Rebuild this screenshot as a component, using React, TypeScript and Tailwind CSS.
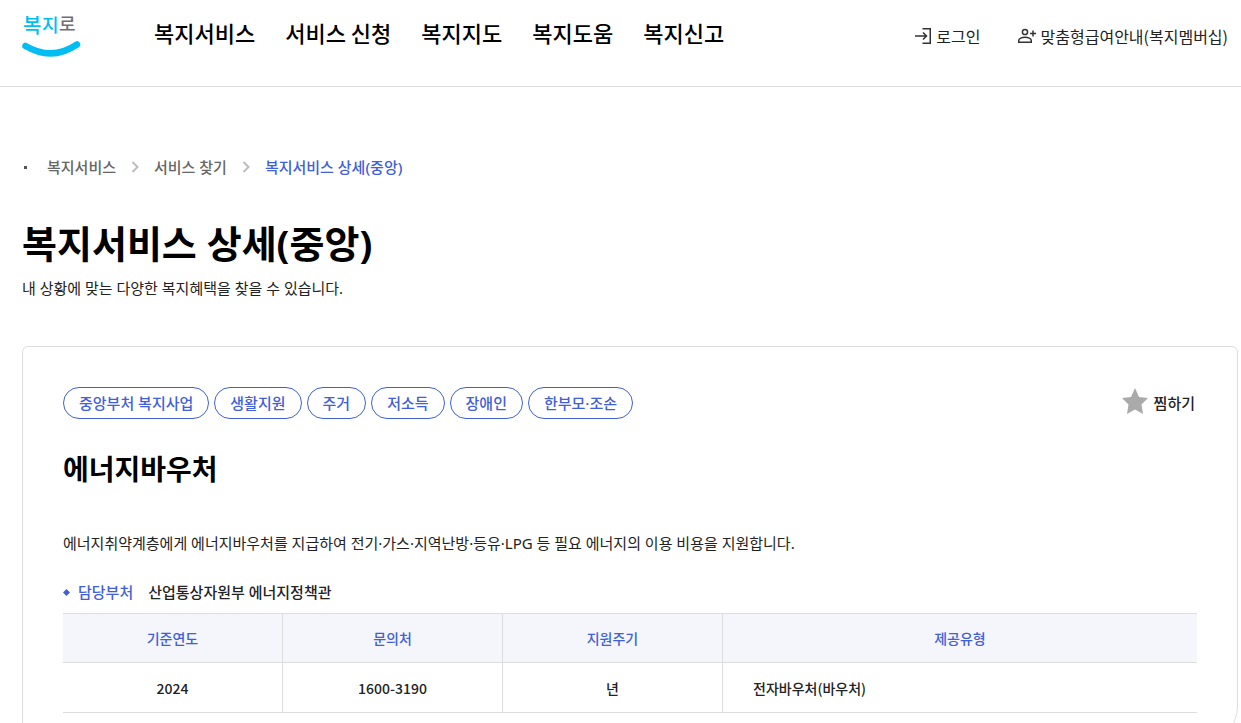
import React from 'react';

interface Column {
  title: string;
  value: string;
  width: string;
  align: string;
}

const menus = ['복지서비스', '서비스 신청', '복지지도', '복지도움', '복지신고'];

const crumbs = ['복지서비스', '서비스 찾기'];

const tags = ['중앙부처 복지사업', '생활지원', '주거', '저소득', '장애인', '한부모·조손'];

const columns: Column[] = [
  { title: '기준연도', value: '2024', width: 'w-[220px]', align: 'text-center' },
  { title: '문의처', value: '1600-3190', width: 'w-[220px]', align: 'text-center' },
  { title: '지원주기', value: '년', width: 'w-[220px]', align: 'text-center' },
  { title: '제공유형', value: '전자바우처(바우처)', width: '', align: 'text-left' },
];

const Logo: React.FC = () => (
  <svg width="60" height="52" viewBox="0 0 60 52" role="img" aria-label="복지로">
    <g fontFamily="'Noto Sans CJK KR', sans-serif" fontWeight="500">
      <text x="1" y="27" fontSize="20" fill="#00bdf2">복</text>
      <text x="20" y="26" fontSize="18" fill="#00bdf2">지</text>
      <text x="37" y="25" fontSize="18" fill="#6f6f74">로</text>
    </g>
    <path d="M3.500 40 Q30 55.500 55 38.500" fill="none" stroke="#00bdf2" strokeWidth="6.500" strokeLinecap="round" />
  </svg>
);

const LoginIcon: React.FC = () => (
  <svg width="18" height="18" viewBox="0 0 18 18" fill="none" stroke="#333" strokeWidth="1.5" aria-hidden="true">
    <path d="M8.500 1.750H16.250V16.250H8.500M1 9H12.500M9 5.500L12.500 9L9 12.500" />
  </svg>
);

const MemberIcon: React.FC = () => (
  <svg width="20" height="16" viewBox="0 0 20 16" fill="none" stroke="#333" strokeWidth="1.5" aria-hidden="true">
    <circle cx="8" cy="4" r="2.600" />
    <path d="M1.750 14.250V12.500C1.750 10.500 5 9.250 8 9.250S14.250 10.500 14.250 12.500V14.250ZM16 2.500V8.500M13 5.500H19" />
  </svg>
);

const Chevron: React.FC = () => (
  <svg width="8" height="12" viewBox="0 0 8 12" fill="none" stroke="#bdbdbd" strokeWidth="2" aria-hidden="true">
    <path d="M1.500 1L6.500 6L1.500 11" />
  </svg>
);

const Header: React.FC = () => (
  <header className="flex h-[87px] items-start justify-between border-b border-[#dddddd] pl-[22px] pr-[13px] font-['Noto_Sans_CJK_KR',sans-serif]">
    <div className="flex items-start">
      <a href="#" className="mt-[6px]"><Logo /></a>
      <nav className="ml-[72px] mt-4 flex gap-[30px] text-[22px] font-medium leading-[32px] text-black">
        {menus.map((menu) => (
          <a key={menu} href="#">{menu}</a>
        ))}
      </nav>
    </div>
    <div className="mt-6 flex gap-9 text-base leading-6">
      <a href="#" className="flex items-center gap-1"><LoginIcon />로그인</a>
      <a href="#" className="flex items-center gap-1"><MemberIcon />맞춤형급여안내(복지멤버십)</a>
    </div>
  </header>
);

const DetailTable: React.FC = () => (
  <table className="mt-[9px] w-full table-fixed border-separate border-spacing-0 font-['Noto_Sans_CJK_KR',sans-serif] text-[14px] leading-6">
    <thead>
      <tr className="bg-[#f5f6fb] text-[#4160d7]">
        {columns.map((col) => (
          <th key={col.title} scope="col" className={`${col.width} h-[50px] border-y border-r border-[#dddddd] font-medium last:border-r-0`}>
            {col.title}
          </th>
        ))}
      </tr>
    </thead>
    <tbody>
      <tr>
        {columns.map((col) => (
          <td key={col.title} className={`${col.align} h-[50px] border-b border-r border-[#dddddd] px-[30px] font-medium last:border-r-0`}>
            {col.value}
          </td>
        ))}
      </tr>
    </tbody>
  </table>
);

const App: React.FC = () => {
  return (
    <div className="min-h-screen bg-white font-['Noto_Sans','Noto_Sans_CJK_KR',sans-serif] text-[#222222]">
      <Header />

      <main className="pl-[22px] pr-[3px]">
        <nav className="mt-[68px] flex items-center text-[15px] font-medium leading-6 text-[#666666]">
          <span className="ml-[2px] mr-5 size-[3px] bg-[#555555]" />
          {crumbs.map((crumb) => (
            <React.Fragment key={crumb}>
              <a href="#">{crumb}</a>
              <span className="mx-[15px]"><Chevron /></span>
            </React.Fragment>
          ))}
          <a href="#" aria-current="page" className="text-[#4160d7]">복지서비스 상세(중앙)</a>
        </nav>

        <h1 className="mt-9 text-[38px] font-bold leading-[56px] text-black">복지서비스 상세(중앙)</h1>
        <p className="mt-[5px] text-[15px] leading-6">내 상황에 맞는 다양한 복지혜택을 찾을 수 있습니다.</p>

        <section className="mt-[46px] rounded-t-[6px] rounded-br-[40px] border border-[#dddddd] px-10 pb-8 pt-10">
          <div className="flex items-center justify-between">
            <ul className="flex gap-[5px]">
              {tags.map((tag) => (
                <li key={tag} className="rounded-full border border-[#4160d7] px-[15px] text-[15px] font-medium leading-[30px] text-[#4160d7]">
                  {tag}
                </li>
              ))}
            </ul>
            <button type="button" className="flex items-start gap-[6px] pr-[2px] text-[15px] font-medium leading-[30px]">
              <svg width="26" height="26" viewBox="0 0 26 26" fill="#aaaaaa" aria-hidden="true">
                <path d="M13 0L17 9L26 10L19.500 16.500L21 26L13 21.500L5 26L6.500 16.500L0 10L9 9Z" />
              </svg>
              찜하기
            </button>
          </div>

          <h2 className="mt-7 text-[28px] font-bold leading-[44px] text-black">에너지바우처</h2>
          <p className="mt-10 text-[15px] leading-6">
            에너지취약계층에게 에너지바우처를 지급하여 전기·가스·지역난방·등유·LPG 등 필요 에너지의 이용 비용을 지원합니다.
          </p>

          <dl className="mt-[25px] flex items-center text-[15px] font-medium leading-6">
            <dt className="flex items-center gap-2 text-[#4160d7]">
              <svg width="7" height="7" viewBox="0 0 7 7" fill="#4160d7" aria-hidden="true">
                <path d="M3.500 0L7 3.500L3.500 7L0 3.500Z" />
              </svg>
              담당부처
            </dt>
            <dd className="ml-[15px]">산업통상자원부 에너지정책관</dd>
          </dl>

          <DetailTable />
        </section>
      </main>
    </div>
  );
};

export default App;
